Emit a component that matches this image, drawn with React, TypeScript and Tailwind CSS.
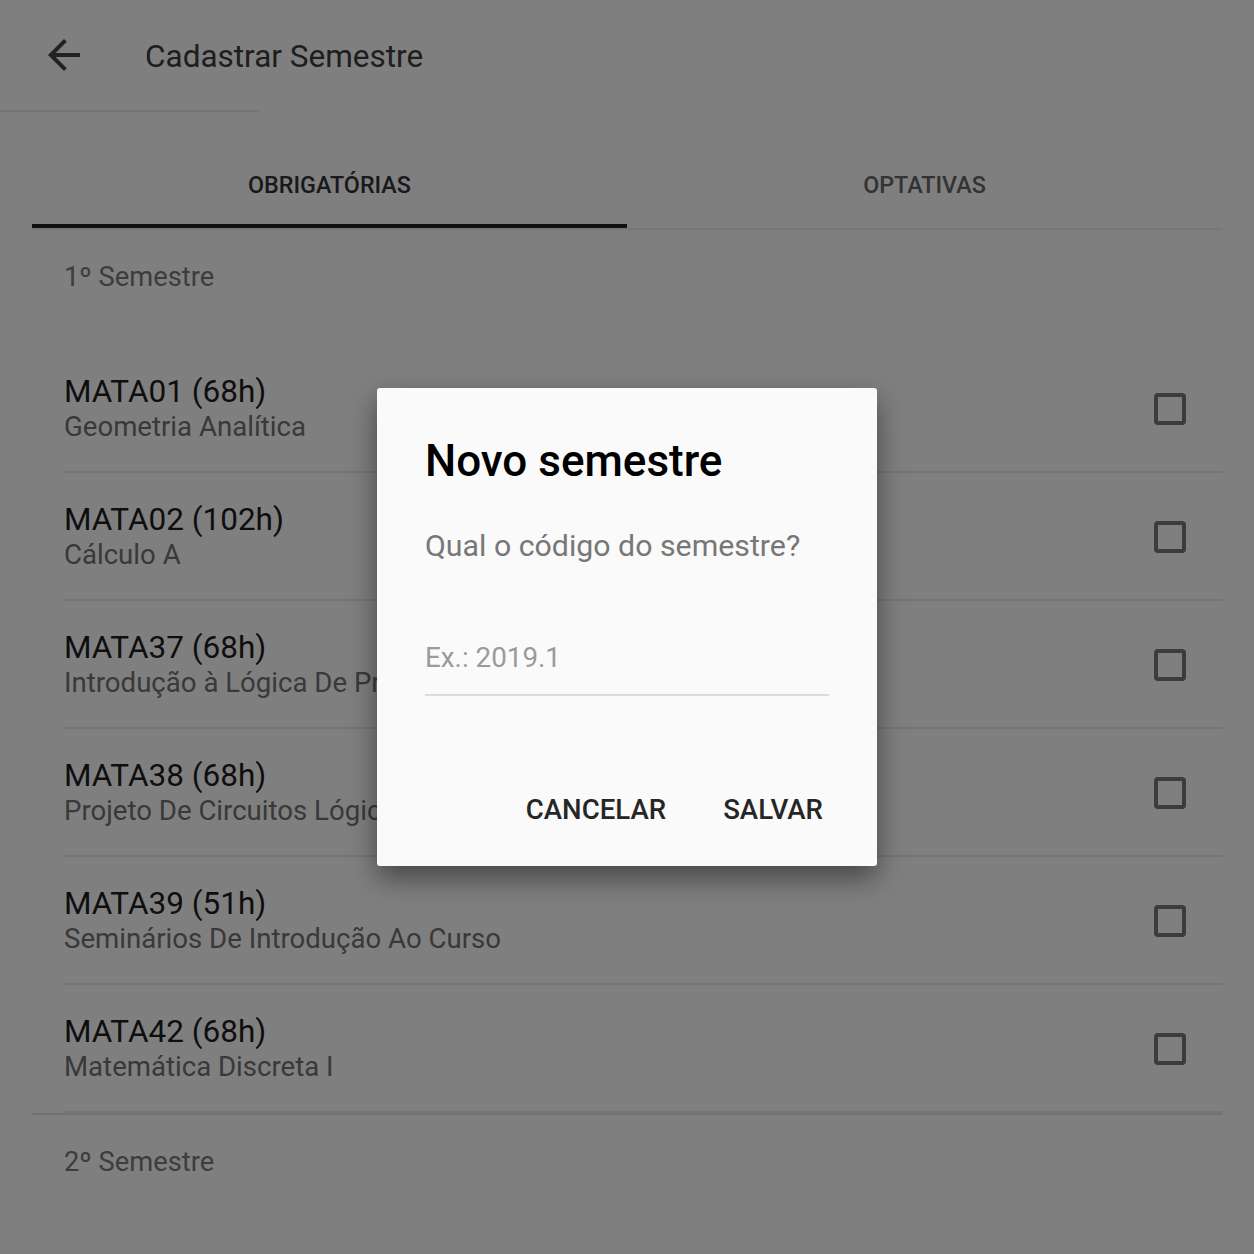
import React from "react";

const courses = [
  { code: "MATA01 (68h)", name: "Geometria Analítica" },
  { code: "MATA02 (102h)", name: "Cálculo A" },
  { code: "MATA37 (68h)", name: "Introdução à Lógica De Programação" },
  { code: "MATA38 (68h)", name: "Projeto De Circuitos Lógicos" },
  { code: "MATA39 (51h)", name: "Seminários De Introdução Ao Curso" },
  { code: "MATA42 (68h)", name: "Matemática Discreta I" },
];

const font = { fontFamily: "Roboto, 'Noto Sans', sans-serif" };

const App = () => {
  return (
    <div className="relative w-[1254px] h-[1254px] overflow-hidden bg-white" style={font}>
      {/* Toolbar */}
      <div className="h-[110px] flex items-center pl-[40px]">
        <svg width="48" height="48" viewBox="0 0 24 24" fill="#444444">
          <path d="M20 11H7.83l5.59-5.59L12 4l-8 8 8 8 1.41-1.41L7.83 13H20v-2z" />
        </svg>
        <span className="ml-[57px] mt-[3px] text-[31.5px] leading-[40px] text-[#3c3c3c]">Cadastrar Semestre</span>
      </div>
      <div className="h-[2px] w-[260px] bg-[#ebebeb]" />

      {/* Tabs */}
      <div className="mx-8 flex border-b-2 border-[#eeeeee]">
        <div className="relative flex-1 h-[116px] flex items-end justify-center pb-[31px]">
          <span className="text-[23.3px] leading-[24px] font-medium text-[#333333]">OBRIGATÓRIAS</span>
          <div className="absolute left-0 right-0 bottom-0 h-[4px] bg-[#222222]" />
        </div>
        <div className="flex-1 h-[116px] flex items-end justify-center pb-[31px]">
          <span className="text-[23.3px] leading-[24px] font-medium text-[#666666]">OPTATIVAS</span>
        </div>
      </div>

      {/* 1º Semestre */}
      <div className="mx-8 border-b-2 border-[#e4e4e4]">
        <div className="h-[115px] pt-[31px] pl-8 text-[27.3px] leading-[32px] text-[#7a7a7a]">1º Semestre</div>
        <div className="pl-8">
          {courses.map((c) => (
            <div key={c.code} className="h-[128px] flex items-center border-b-2 border-[#e8e8e8]">
              <div className="flex-1 min-w-0 pt-[2px]">
                <div className="text-[31.5px] leading-[36px] text-[#1c1c1c]">{c.code}</div>
                <div className="text-[27.6px] leading-[34px] text-[#727272]">{c.name}</div>
              </div>
              <div className="w-[32px] h-[32px] mr-[36px] mt-[2px] border-[4px] border-[#787878] rounded-[4px]" />
            </div>
          ))}
        </div>
      </div>

      <div className="mx-8 h-[115px] pt-[31px] pl-8 text-[27.3px] leading-[32px] text-[#7a7a7a]">2º Semestre</div>

      {/* Dialog */}
      <div className="absolute inset-0 bg-black/50 flex items-center justify-center">
        <div className="w-[500px] h-[478px] bg-[#fafafa] rounded-[3px] shadow-[0_12px_28px_rgba(0,0,0,0.45)] pl-[48px] pt-[49px]">
          <div className="text-[44px] leading-[48px] font-medium text-black">Novo semestre</div>
          <div className="mt-[43px] text-[30.3px] leading-[36px] text-[#777777]">Qual o código do semestre?</div>
          <div className="mt-[76px] w-[404px] border-b-2 border-[#dcdcdc] pb-[18px] text-[27.8px] leading-[36px] text-[#9a9a9a]">
            Ex.: 2019.1
          </div>
          <div className="mt-[98px] flex justify-end gap-[57px] pr-[54px]">
            <span className="text-[27.6px] leading-[32px] font-medium text-[#262626]">CANCELAR</span>
            <span className="text-[27.6px] leading-[32px] font-medium text-[#262626]">SALVAR</span>
          </div>
        </div>
      </div>
    </div>
  );
};

export default App;
